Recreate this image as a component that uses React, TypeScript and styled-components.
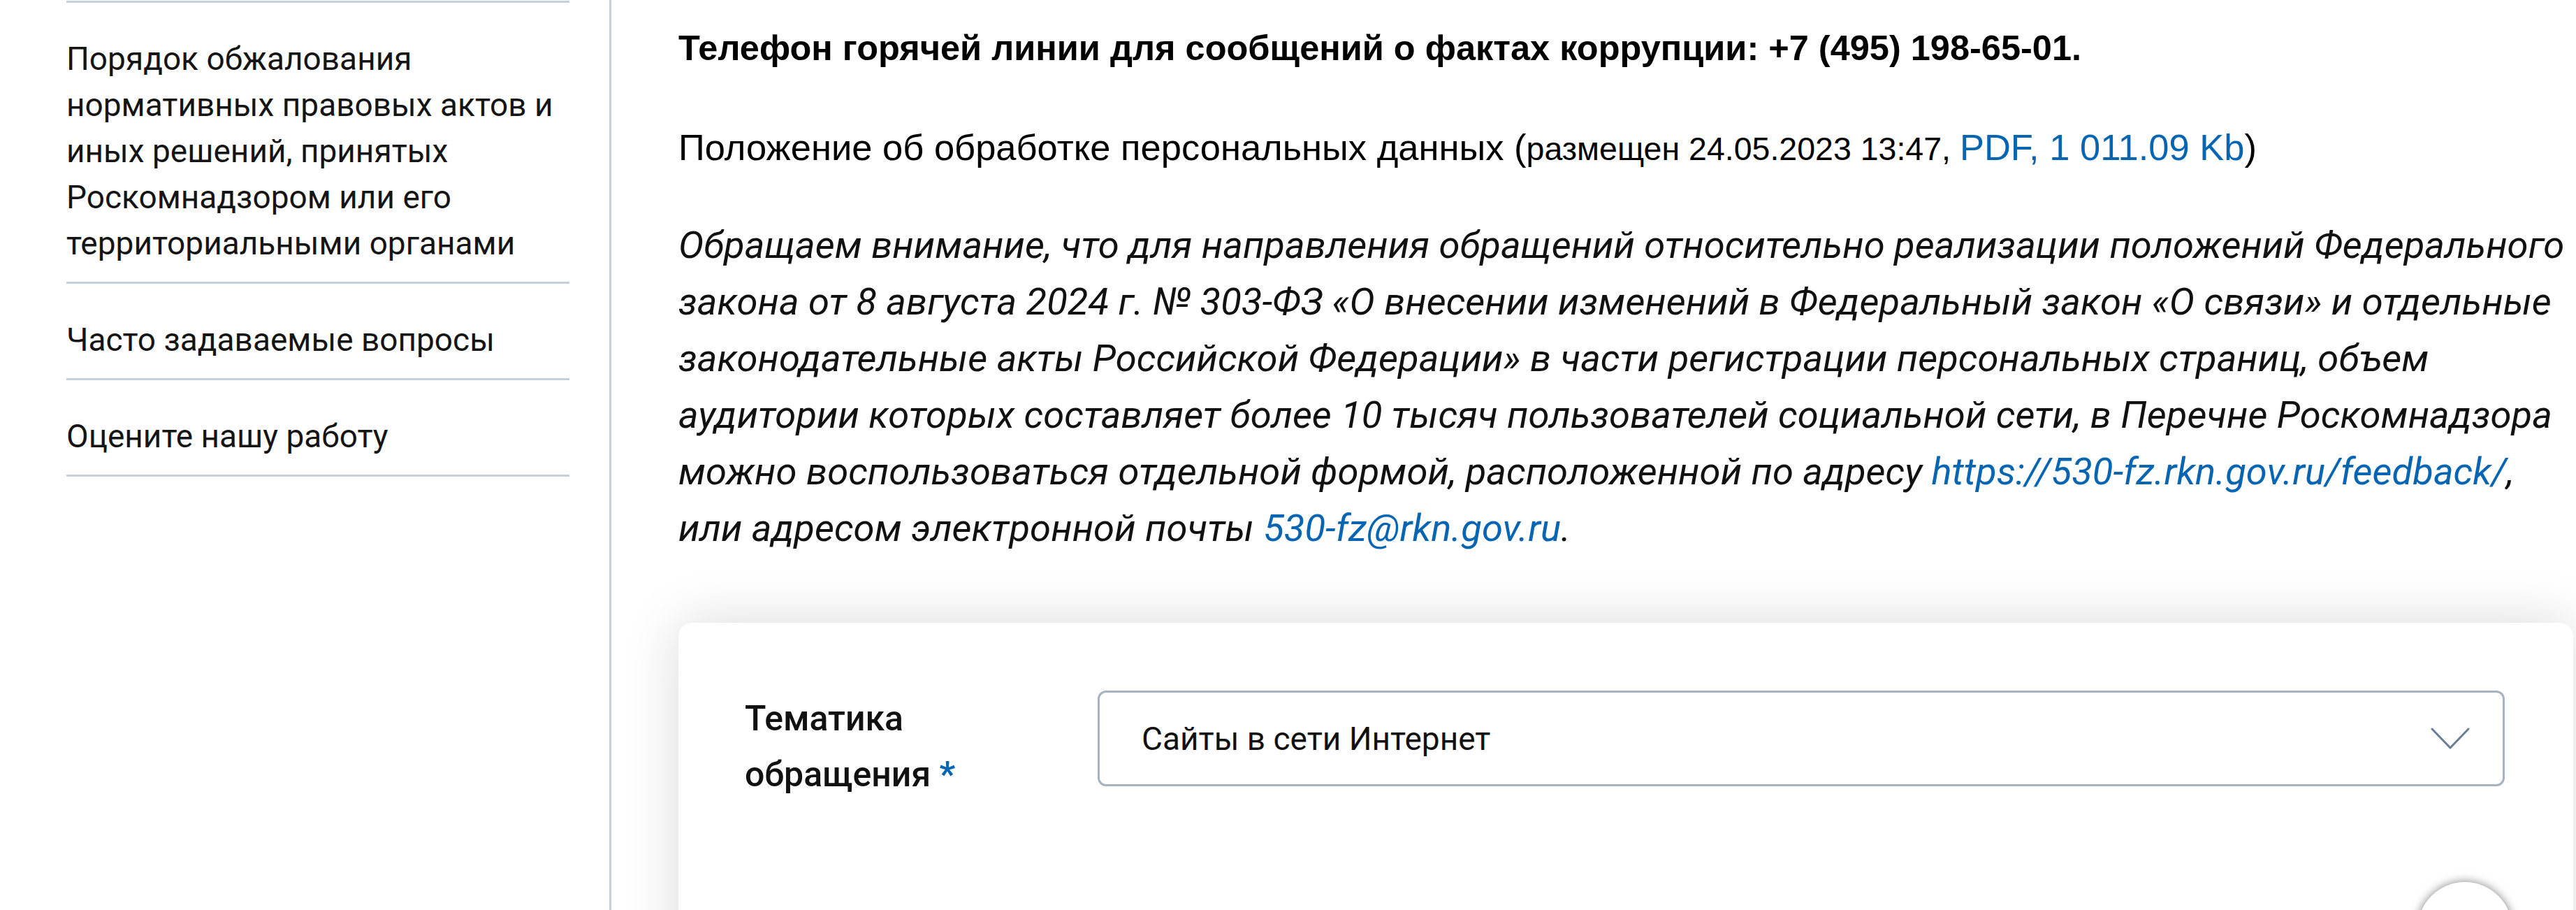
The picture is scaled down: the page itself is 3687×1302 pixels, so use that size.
import React from 'react';
import styled, { createGlobalStyle } from 'styled-components';

const GlobalStyle = createGlobalStyle`
  html, body {
    margin: 0;
    padding: 0;
    background: #ffffff;
  }
  body {
    width: 3687px;
    height: 1302px;
    overflow: hidden;
    -webkit-font-smoothing: antialiased;
  }
  * { box-sizing: border-box; }
`;

const Page = styled.div`
  display: flex;
  align-items: stretch;
  width: 3687px;
  height: 1302px;
  overflow: hidden;
`;

const Sidebar = styled.nav`
  flex: 0 0 720px;
  margin: 0 57px 0 95px;
  padding-top: 1px;
`;

const NavList = styled.ul`
  list-style: none;
  margin: 0;
  padding: 0;
  border-top: 3px solid #c6d0db;
`;

const NavItem = styled.li`
  padding: 47px 0 22px;
  border-bottom: 3px solid #c6d0db;
  font-family: Roboto, "Noto Sans", sans-serif;
  font-weight: 400;
  font-size: 46px;
  line-height: 66px;
  color: #151515;
  white-space: nowrap;
`;

const Main = styled.main`
  flex: 1 1 auto;
  min-width: 0;
  border-left: 3px solid #c6d0db;
  padding: 28px 4px 0 96px;
`;

const Hotline = styled.p`
  margin: 0;
  font-family: "Liberation Sans", Arial, sans-serif;
  font-weight: 700;
  font-size: 50.5px;
  line-height: 81px;
  color: #000;
  white-space: nowrap;
`;

const DocLine = styled.p`
  margin: 61px 0 0;
  font-family: "Liberation Sans", Arial, sans-serif;
  font-weight: 400;
  font-size: 52.5px;
  line-height: 81px;
  color: #000;
  white-space: nowrap;
`;

const Meta = styled.span`
  font-size: 46.5px;
`;

const Link = styled.a`
  color: #0865b2;
  text-decoration: none;
`;

const Notice = styled.p`
  margin: 56px 0 0;
  font-family: Roboto, "Noto Sans", sans-serif;
  font-style: italic;
  font-weight: 400;
  font-size: 54.4px;
  line-height: 81px;
  color: #111;
  white-space: nowrap;
`;

const Card = styled.section`
  margin-top: 95px;
  min-height: 700px;
  padding: 97px 98px 0 95px;
  background: #fff;
  border-radius: 20px;
  box-shadow: 0 0 80px rgba(0, 0, 0, 0.15);
`;

const FormRow = styled.div`
  display: flex;
  align-items: flex-start;
`;

const FieldLabel = styled.label`
  flex: 0 0 505px;
  font-family: Roboto, "Noto Sans", sans-serif;
  font-weight: 500;
  font-size: 50px;
  line-height: 80px;
  color: #111;
`;

const Required = styled.span`
  color: #0865b2;
  font-weight: 700;
`;

const SelectBox = styled.div`
  flex: 1 1 auto;
  height: 137px;
  display: flex;
  align-items: center;
  justify-content: space-between;
  padding: 0 47px 0 60px;
  border: 3px solid #a6b3c0;
  border-radius: 12px;
  font-family: Roboto, "Noto Sans", sans-serif;
  font-size: 46px;
  color: #111;
`;

const Chevron = styled.svg`
  width: 56px;
  height: 31px;
  flex: 0 0 auto;
`;

const ScrollTop = styled.button`
  position: fixed;
  left: 3460px;
  top: 1262px;
  width: 136px;
  height: 136px;
  border-radius: 50%;
  border: none;
  background: #fff;
  box-shadow: 0 0 14px rgba(0, 0, 0, 0.5);
  padding: 0;
`;

const navItems: string[][] = [
  [
    'Порядок обжалования',
    'нормативных правовых актов и',
    'иных решений, принятых',
    'Роскомнадзором или его',
    'территориальными органами',
  ],
  ['Часто задаваемые вопросы'],
  ['Оцените нашу работу'],
];

export default function App() {
  return (
    <>
      <GlobalStyle />
      <Page>
        <Sidebar>
          <NavList>
            {navItems.map((lines, i) => (
              <NavItem key={i}>
                {lines.map((l, j) => (
                  <React.Fragment key={j}>
                    {j > 0 && <br />}
                    {l}
                  </React.Fragment>
                ))}
              </NavItem>
            ))}
          </NavList>
        </Sidebar>
        <Main>
          <Hotline>
            Телефон горячей линии для сообщений о фактах коррупции: +7 (495) 198-65-01.
          </Hotline>
          <DocLine>
            Положение об обработке персональных данных (
            <Meta>размещен 24.05.2023 13:47, </Meta>
            <Link href="#">PDF, 1 011.09 Kb</Link>)
          </DocLine>
          <Notice>
            Обращаем внимание, что для направления обращений относительно реализации положений Федерального
            <br />
            закона от 8 августа 2024 г. № 303-ФЗ «О внесении изменений в Федеральный закон «О связи» и отдельные
            <br />
            законодательные акты Российской Федерации» в части регистрации персональных страниц, объем
            <br />
            аудитории которых составляет более 10 тысяч пользователей социальной сети, в Перечне Роскомнадзора
            <br />
            можно воспользоваться отдельной формой, расположенной по адресу{' '}
            <Link href="#">https://530-fz.rkn.gov.ru/feedback/</Link>,
            <br />
            или адресом электронной почты <Link href="#">530-fz@rkn.gov.ru</Link>.
          </Notice>
          <Card>
            <FormRow>
              <FieldLabel>
                Тематика
                <br />
                обращения <Required>*</Required>
              </FieldLabel>
              <SelectBox>
                <span>Сайты в сети Интернет</span>
                <Chevron viewBox="0 0 56 31" fill="none">
                  <polyline
                    points="2,2 28,29 54,2"
                    stroke="#687d96"
                    strokeWidth="3"
                    strokeLinecap="round"
                    strokeLinejoin="round"
                  />
                </Chevron>
              </SelectBox>
            </FormRow>
          </Card>
        </Main>
      </Page>
      <ScrollTop aria-label="Наверх" />
    </>
  );
}
